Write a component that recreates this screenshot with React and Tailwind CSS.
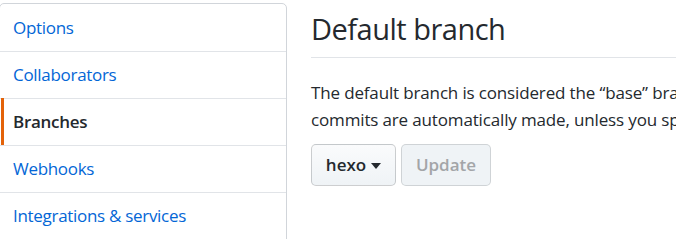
import React from 'react'

const font = { fontFamily: '"Open Sans", "Noto Sans", "Liberation Sans", sans-serif' }

const items = [
  { label: 'Options' },
  { label: 'Collaborators' },
  { label: 'Branches', active: true },
  { label: 'Webhooks' },
  { label: 'Integrations & services' },
]

function Caret() {
  return (
    <svg width="10" height="6" viewBox="0 0 10 6" className="ml-[5px] mt-[2px]">
      <path d="M0 0h10L5 6z" fill="#24292e" />
    </svg>
  )
}

export default function App() {
  return (
    <div className="w-[676px] h-[239px] overflow-hidden bg-white flex pt-[3px]" style={font}>

      {/* ── Sidebar menu ── */}
      <nav className="w-[288px] ml-[-1px] shrink-0 border border-[#d1d5da] rounded-tr-[5px] rounded-tl-[5px] h-[260px]">
        {items.map((item, i) => (
          <div
            key={item.label}
            className={
              'relative h-[47px] flex items-center pl-[13px] text-[17px] tracking-[-0.3px] ' +
              (i > 0 ? 'border-t border-[#e1e4e8] ' : '') +
              (item.active ? 'font-semibold text-[#24292e]' : 'text-[#0366d6]')
            }
          >
            {item.active && <span className="absolute left-[1px] top-[-1px] bottom-0 w-[3px] bg-[#e36209]" />}
            {item.label}
          </div>
        ))}
      </nav>

      {/* ── Main content ── */}
      <main className="ml-[24px] flex-1 min-w-0">
        <h2 className="text-[29px] leading-[40px] tracking-[-0.5px] text-[#24292e] pt-[6px] pb-[8px] border-b border-[#e1e4e8] whitespace-nowrap">
          Default branch
        </h2>
        <p className="mt-[21px] text-[17px] leading-[27px] tracking-[-0.15px] text-[#24292e] whitespace-nowrap">
          <span className="block">The default branch is considered the “base” branch in your repository, against which all pull requests and code</span>
          <span className="block">commits are automatically made, unless you specify a different branch.</span>
        </p>
        <div className="mt-[11px] flex gap-[5px]">
          <button className="h-[42px] w-[85px] justify-center flex items-center rounded-[5px] border border-[#1b1f2333] bg-gradient-to-b from-[#fafbfc] to-[#eff3f6] text-[17px] font-semibold text-[#24292e]">
            hexo
            <Caret />
          </button>
          <button className="h-[42px] w-[90px] justify-center flex items-center rounded-[5px] border border-[#1b1f2326] bg-[#eff3f6] text-[17px] font-semibold text-[#a3a5a8]">
            Update
          </button>
        </div>
      </main>

    </div>
  )
}
